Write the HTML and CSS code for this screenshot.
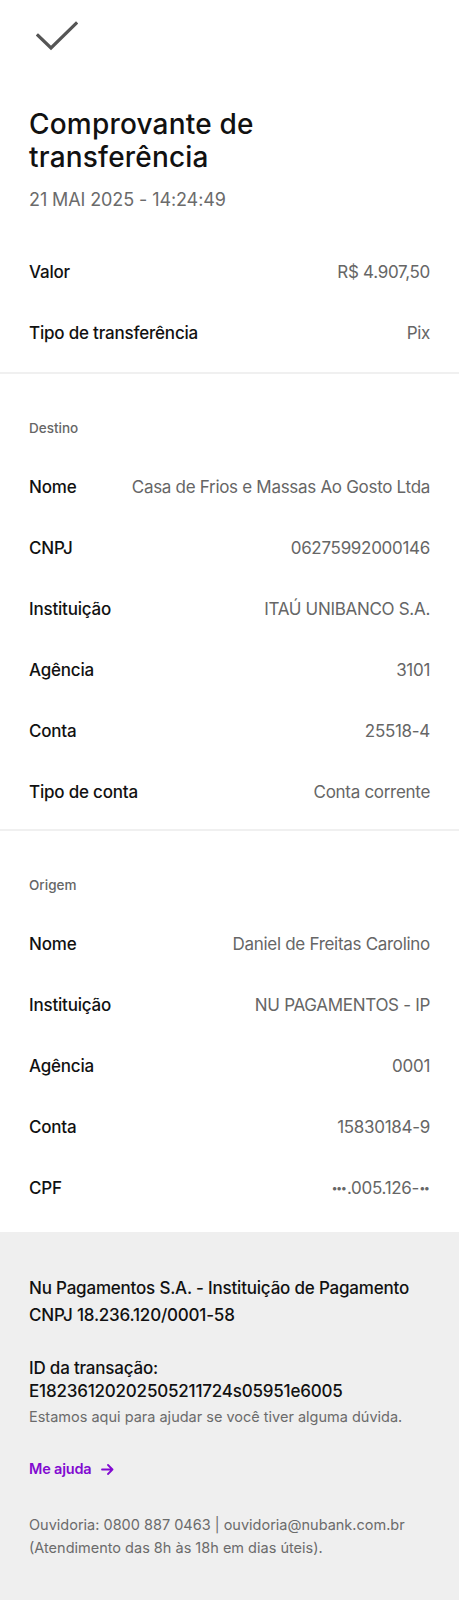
FILE: index.html
```html
<!DOCTYPE html>
<html lang="pt-BR">
<head>
<meta charset="utf-8">
<title>Comprovante de transferência</title>
<link rel="stylesheet" href="styles.css">
</head>
<body>
<main class="page">
  <header class="header">
    <svg class="check" width="42" height="30" viewBox="0 0 42 30" aria-hidden="true">
      <path d="M2 14.5 L15 27 L40 2.5" fill="none" stroke="#555" stroke-width="3.2" stroke-linecap="square" stroke-linejoin="miter"/>
    </svg>
    <h1 class="title">Comprovante de transferência</h1>
    <p class="date">21 MAI 2025 - 14:24:49</p>
  </header>

  <section class="section section-first">
    <div class="row"><span class="label">Valor</span><span class="value">R$ 4.907,50</span></div>
    <div class="row"><span class="label">Tipo de transferência</span><span class="value">Pix</span></div>
  </section>

  <section class="section">
    <h2 class="section-title">Destino</h2>
    <div class="row"><span class="label">Nome</span><span class="value">Casa de Frios e Massas Ao Gosto Ltda</span></div>
    <div class="row"><span class="label">CNPJ</span><span class="value">06275992000146</span></div>
    <div class="row"><span class="label">Instituição</span><span class="value">ITAÚ UNIBANCO S.A.</span></div>
    <div class="row"><span class="label">Agência</span><span class="value">3101</span></div>
    <div class="row"><span class="label">Conta</span><span class="value">25518-4</span></div>
    <div class="row"><span class="label">Tipo de conta</span><span class="value">Conta corrente</span></div>
  </section>

  <section class="section section-last">
    <h2 class="section-title">Origem</h2>
    <div class="row"><span class="label">Nome</span><span class="value">Daniel de Freitas Carolino</span></div>
    <div class="row"><span class="label">Instituição</span><span class="value">NU PAGAMENTOS - IP</span></div>
    <div class="row"><span class="label">Agência</span><span class="value">0001</span></div>
    <div class="row"><span class="label">Conta</span><span class="value">15830184-9</span></div>
    <div class="row"><span class="label">CPF</span><span class="value"><span class="mask">•••</span>.005.126-<span class="mask">••</span></span></div>
  </section>

  <footer class="footer">
    <p class="company">Nu Pagamentos S.A. - Instituição de Pagamento<br>CNPJ 18.236.120/0001-58</p>
    <p class="txid">ID da transação:<br>E18236120202505211724s05951e6005</p>
    <p class="help">Estamos aqui para ajudar se você tiver alguma dúvida.</p>
    <a class="help-link" href="#">Me ajuda
      <svg class="arrow" width="13" height="11" viewBox="0 0 13 11" aria-hidden="true">
        <path d="M1 5.5 H11.5 M7 1 L11.5 5.5 L7 10" fill="none" stroke="#820ad1" stroke-width="1.8" stroke-linecap="round" stroke-linejoin="round"/>
      </svg>
    </a>
    <p class="ombuds">Ouvidoria: 0800 887 0463 | ouvidoria@nubank.com.br<br>(Atendimento das 8h às 18h em dias úteis).</p>
  </footer>
</main>
</body>
</html>
```

FILE: styles.css
```css
* { box-sizing: border-box; }

html, body {
  margin: 0;
  padding: 0;
  background: #ffffff;
}

body {
  font-family: Inter, Roboto, "Liberation Sans", sans-serif;
  color: #111111;
  -webkit-font-smoothing: antialiased;
}

.page {
  display: flex;
  flex-direction: column;
  min-height: 1600px;
}

.header {
  padding: 21px 29px 0;
  display: flex;
  flex-direction: column;
}

.check {
  display: block;
  margin-left: 7px;
}

.title {
  margin: 57px 0 0;
  font-size: 28px;
  line-height: 33px;
  font-weight: 500;
  letter-spacing: 0.2px;
  color: #111;
  max-width: 280px;
}

.date {
  margin: 14px 0 0;
  font-size: 18px;
  line-height: 24px;
  font-weight: 400;
  letter-spacing: -0.1px;
  color: #6b6b6b;
}

.section {
  padding: 0 29px 7px;
  border-top: 2px solid #f0f0f0;
}

.section-first {
  border-top: none;
  margin-top: 29px;
  padding-bottom: 9px;
}

.section-last {
  padding-bottom: 14px;
}

.section-title {
  margin: 0;
  padding: 44px 0 18px;
  font-size: 13.5px;
  line-height: 20px;
  font-weight: 500;
  color: #666;
}

.row {
  display: flex;
  justify-content: space-between;
  align-items: center;
  height: 61px;
  gap: 16px;
}

.label {
  font-size: 17px;
  font-weight: 500;
  letter-spacing: -0.2px;
  color: #111;
  white-space: nowrap;
}

.value {
  font-size: 17px;
  font-weight: 400;
  letter-spacing: -0.3px;
  color: #666;
  text-align: right;
  white-space: nowrap;
}

.mask {
  font-size: 11px;
  letter-spacing: -1.5px;
  padding-right: 1.5px;
  vertical-align: 1.5px;
}

.footer {
  flex: 1;
  background: #efefef;
  padding: 43px 29px 40px;
  display: flex;
  flex-direction: column;
  align-items: flex-start;
}

.company {
  margin: 0;
  font-size: 17px;
  line-height: 27px;
  font-weight: 500;
  letter-spacing: -0.2px;
  color: #111;
}

.txid {
  margin: 28px 0 0;
  font-size: 17px;
  line-height: 22.5px;
  font-weight: 500;
  letter-spacing: -0.2px;
  color: #111;
}

.help {
  margin: 4px 0 0;
  font-size: 14.5px;
  line-height: 22px;
  color: #6b6b6b;
}

.help-link {
  margin-top: 30px;
  font-size: 14.5px;
  line-height: 22px;
  font-weight: 600;
  letter-spacing: -0.2px;
  color: #820ad1;
  text-decoration: none;
  display: flex;
  align-items: center;
}

.arrow {
  margin-left: 10px;
}

.ombuds {
  margin: 32.5px 0 0;
  font-size: 14.5px;
  line-height: 23px;
  color: #6b6b6b;
}
```
